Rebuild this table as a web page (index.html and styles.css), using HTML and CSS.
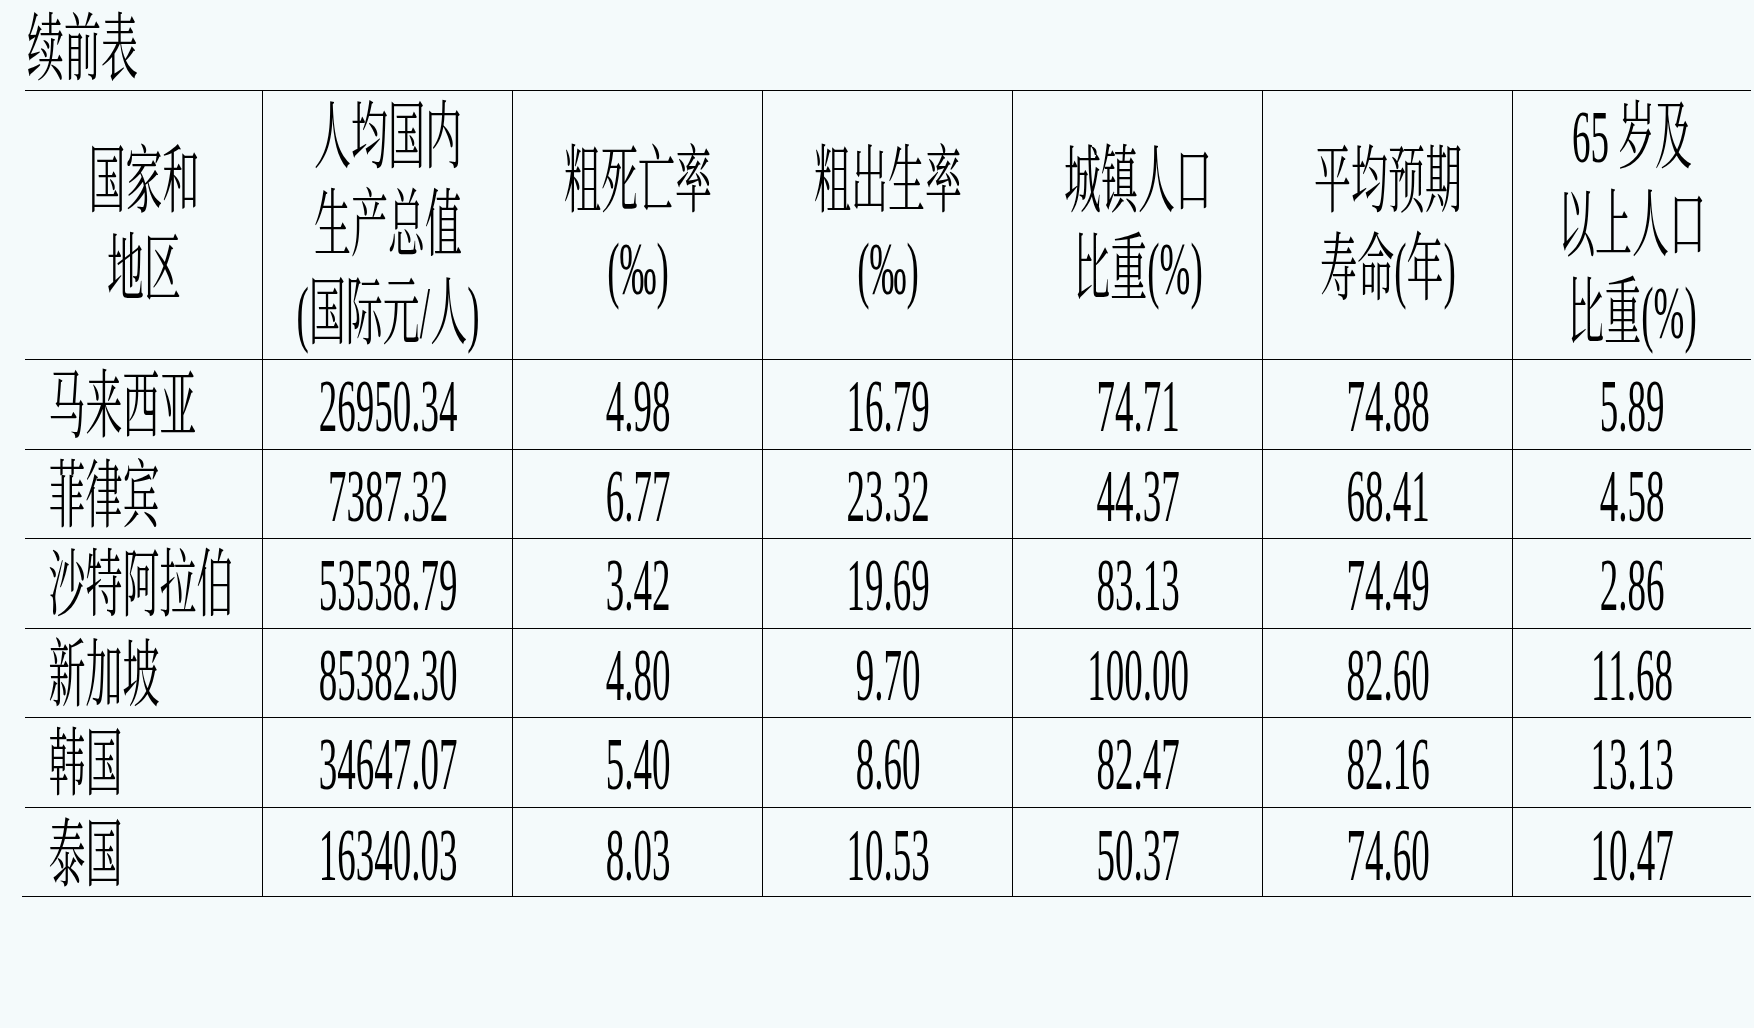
FILE: index.html
```html
<!DOCTYPE html>
<html lang="zh-CN">
<head>
<meta charset="utf-8">
<title>续前表</title>
<link rel="stylesheet" href="styles.css">
</head>
<body>
<div class="page">
  <div class="title"><span class="t">续前表</span></div>
  <div class="table">
    <div class="cell head"><span class="t">国家和<br>地区</span></div>
    <div class="cell head"><span class="t">人均国内<br>生产总值<br>(国际元/人)</span></div>
    <div class="cell head"><span class="t">粗死亡率<br>(‰)</span></div>
    <div class="cell head"><span class="t">粗出生率<br>(‰)</span></div>
    <div class="cell head"><span class="t">城镇人口<br>比重(%)</span></div>
    <div class="cell head"><span class="t">平均预期<br>寿命(年)</span></div>
    <div class="cell head last"><span class="t">65 岁及<br>以上人口<br>比重(%)</span></div>

    <div class="cell name"><span class="t">马来西亚</span></div>
    <div class="cell"><span class="t">26950.34</span></div>
    <div class="cell"><span class="t">4.98</span></div>
    <div class="cell"><span class="t">16.79</span></div>
    <div class="cell"><span class="t">74.71</span></div>
    <div class="cell"><span class="t">74.88</span></div>
    <div class="cell last"><span class="t">5.89</span></div>

    <div class="cell name"><span class="t">菲律宾</span></div>
    <div class="cell"><span class="t">7387.32</span></div>
    <div class="cell"><span class="t">6.77</span></div>
    <div class="cell"><span class="t">23.32</span></div>
    <div class="cell"><span class="t">44.37</span></div>
    <div class="cell"><span class="t">68.41</span></div>
    <div class="cell last"><span class="t">4.58</span></div>

    <div class="cell name"><span class="t">沙特阿拉伯</span></div>
    <div class="cell"><span class="t">53538.79</span></div>
    <div class="cell"><span class="t">3.42</span></div>
    <div class="cell"><span class="t">19.69</span></div>
    <div class="cell"><span class="t">83.13</span></div>
    <div class="cell"><span class="t">74.49</span></div>
    <div class="cell last"><span class="t">2.86</span></div>

    <div class="cell name"><span class="t">新加坡</span></div>
    <div class="cell"><span class="t">85382.30</span></div>
    <div class="cell"><span class="t">4.80</span></div>
    <div class="cell"><span class="t">9.70</span></div>
    <div class="cell"><span class="t">100.00</span></div>
    <div class="cell"><span class="t">82.60</span></div>
    <div class="cell last"><span class="t">11.68</span></div>

    <div class="cell name"><span class="t">韩国</span></div>
    <div class="cell"><span class="t">34647.07</span></div>
    <div class="cell"><span class="t">5.40</span></div>
    <div class="cell"><span class="t">8.60</span></div>
    <div class="cell"><span class="t">82.47</span></div>
    <div class="cell"><span class="t">82.16</span></div>
    <div class="cell last"><span class="t">13.13</span></div>

    <div class="cell name final"><span class="t">泰国</span></div>
    <div class="cell final"><span class="t">16340.03</span></div>
    <div class="cell final"><span class="t">8.03</span></div>
    <div class="cell final"><span class="t">10.53</span></div>
    <div class="cell final"><span class="t">50.37</span></div>
    <div class="cell final"><span class="t">74.60</span></div>
    <div class="cell last final"><span class="t">10.47</span></div>
  </div>
  <div class="bottom-rule"></div>
</div>
</body>
</html>
```
FILE: styles.css
```css
html, body {
  margin: 0;
  padding: 0;
  background: #f4fafb;
}

body {
  width: 1754px;
  height: 1028px;
  overflow: hidden;
  color: #000;
  font-family: "Liberation Serif", "Noto Serif CJK SC", "Noto Sans CJK SC", serif;
  font-size: 74px;
  line-height: 88px;
}

.page {
  padding-left: 25px;
}

.title {
  height: 90px;
  padding-top: 5px;
  box-sizing: border-box;
  width: 240px;
}

.t {
  display: block;
  flex: 0 0 auto;
  width: 200%;
  margin-left: -50%;
  transform: scaleX(0.5);
  transform-origin: 50% 50%;
  white-space: nowrap;
}

.title .t {
  text-align: left;
  padding-left: 4px;
  box-sizing: border-box;
}

.table {
  display: grid;
  grid-template-columns: 238px repeat(5, 250px) 238px;
  grid-template-rows: 269px repeat(5, 89.5px) 88.5px;
  width: 1726px;
  border-top: 1px solid #000;
}

.cell {
  box-sizing: border-box;
  border-right: 1px solid #000;
  border-bottom: 1px solid #000;
  display: flex;
  align-items: center;
  text-align: center;
  min-width: 0;
}

.cell.last {
  border-right: none;
}

.cell.final {
  border-bottom: none;
}

.cell .t {
  padding-top: 4px;
  box-sizing: border-box;
}

.cell.final .t {
  padding-top: 6px;
}

.cell.head .t {
  padding-top: 0;
}

.cell.name .t {
  text-align: left;
  padding-left: 46px;
}

.bottom-rule {
  width: 1729px;
  margin-left: -3px;
  height: 1px;
  background: #000;
}
```
